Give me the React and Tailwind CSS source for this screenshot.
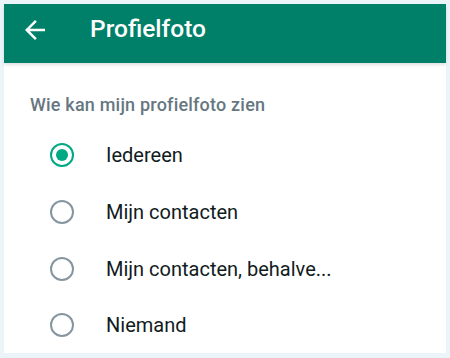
const options = [
  { label: "Iedereen", checked: true },
  { label: "Mijn contacten", checked: false },
  { label: "Mijn contacten, behalve...", checked: false },
  { label: "Niemand", checked: false },
];

function BackArrow() {
  return (
    <svg width="30" height="30" viewBox="0 0 24 24" className="ml-[16px] shrink-0" fill="white">
      <path d="M20 11H7.83l5.59-5.59L12 4l-8 8 8 8 1.41-1.41L7.83 13H20v-2z" />
    </svg>
  );
}

function Radio({ checked }) {
  return (
    <span
      className={`w-[24px] h-[24px] rounded-full border-[2.5px] flex items-center justify-center shrink-0 ${
        checked ? "border-[#00a884]" : "border-[#8696a0]"
      }`}
    >
      {checked && <span className="w-[12px] h-[12px] rounded-full bg-[#00a884]" />}
    </span>
  );
}

export default function App() {
  return (
    <div className="w-[450px] h-[358px] bg-[#eaf4f9] p-1 font-['Roboto',sans-serif]">
      <div className="bg-white h-[349px] w-[442px] flex flex-col">
        <header className="h-[59px] pb-[8px] bg-[#008069] flex items-center shadow-[0_2px_3px_rgba(0,0,0,0.12)] shrink-0">
          <BackArrow />
          <h1 className="ml-[40px] text-white text-[24.5px] font-medium">Profielfoto</h1>
        </header>

        <p className="mt-[30px] ml-[26px] text-[18px] leading-[24px] font-medium tracking-[0.2px] text-[#667781]">
          Wie kan mijn profielfoto zien
        </p>

        <ul className="mt-[10px] flex flex-col">
          {options.map((o) => (
            <li key={o.label} className="h-[56.7px] flex items-center pl-[46px]">
              <Radio checked={o.checked} />
              <span className="ml-[32px] text-[20px] text-[#111b21]">{o.label}</span>
            </li>
          ))}
        </ul>
      </div>
    </div>
  );
}
